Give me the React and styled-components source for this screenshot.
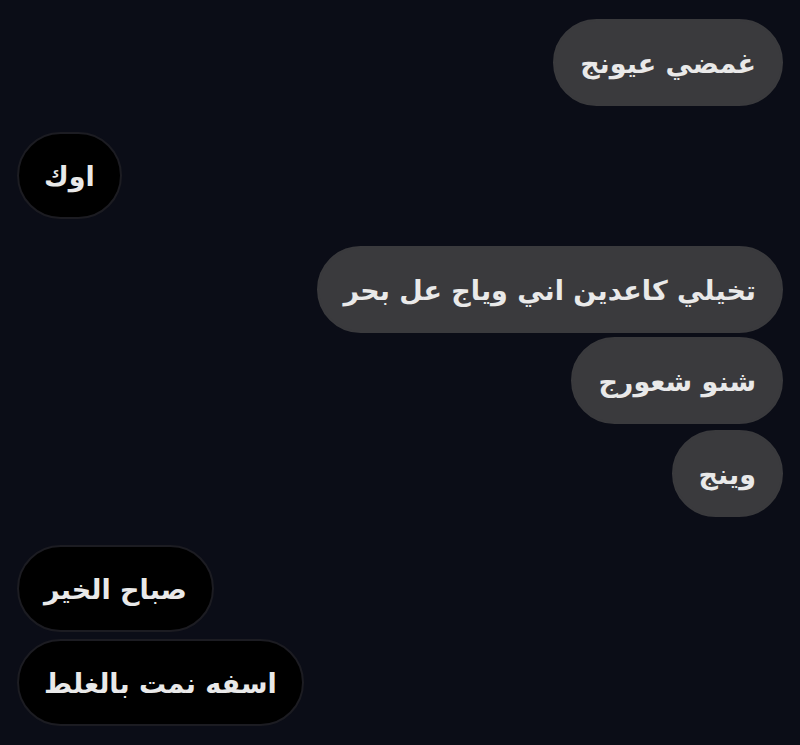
import React from "react";
import styled, { createGlobalStyle } from "styled-components";

const GlobalStyle = createGlobalStyle`
  html, body {
    margin: 0;
    padding: 0;
    background: #0b0d17;
  }
  body {
    font-family: "DejaVu Sans", "Noto Sans", sans-serif;
  }
`;

const messages = [
  { text: "غمضي عيونج", mine: true, gap: 0 },
  { text: "اوك", mine: false, gap: 26 },
  { text: "تخيلي كاعدين اني وياج عل بحر", mine: true, gap: 27 },
  { text: "شنو شعورج", mine: true, gap: 4 },
  { text: "وينج", mine: true, gap: 6 },
  { text: "صباح الخير", mine: false, gap: 28 },
  { text: "اسفه نمت بالغلط", mine: false, gap: 7 },
];

const App = () => {
  return (
    <>
      <GlobalStyle />
      <Chat>
        {messages.map((m, i) => (
          <Row key={i} $mine={m.mine} $gap={m.gap}>
            <Bubble $mine={m.mine} dir="rtl">
              {m.text}
            </Bubble>
          </Row>
        ))}
      </Chat>
    </>
  );
};

export default App;

const Chat = styled.div`
  width: 800px;
  height: 745px;
  box-sizing: border-box;
  padding: 19px 17px 0 17px;
  display: flex;
  flex-direction: column;
  background: #0b0d17;
  overflow: hidden;
`;

const Row = styled.div`
  display: flex;
  justify-content: ${(p) => (p.$mine ? "flex-end" : "flex-start")};
  margin-top: ${(p) => p.$gap}px;
`;

const Bubble = styled.div`
  box-sizing: border-box;
  height: 87px;
  display: flex;
  align-items: center;
  padding: 2px 25px 0;
  border-radius: 44px;
  font-size: 27px;
  font-weight: bold;
  color: #e9e9e9;
  white-space: nowrap;
  background: ${(p) => (p.$mine ? "#3a3a3d" : "#000000")};
  border: 2px solid ${(p) => (p.$mine ? "#3a3a3d" : "#1c1c22")};
`;
